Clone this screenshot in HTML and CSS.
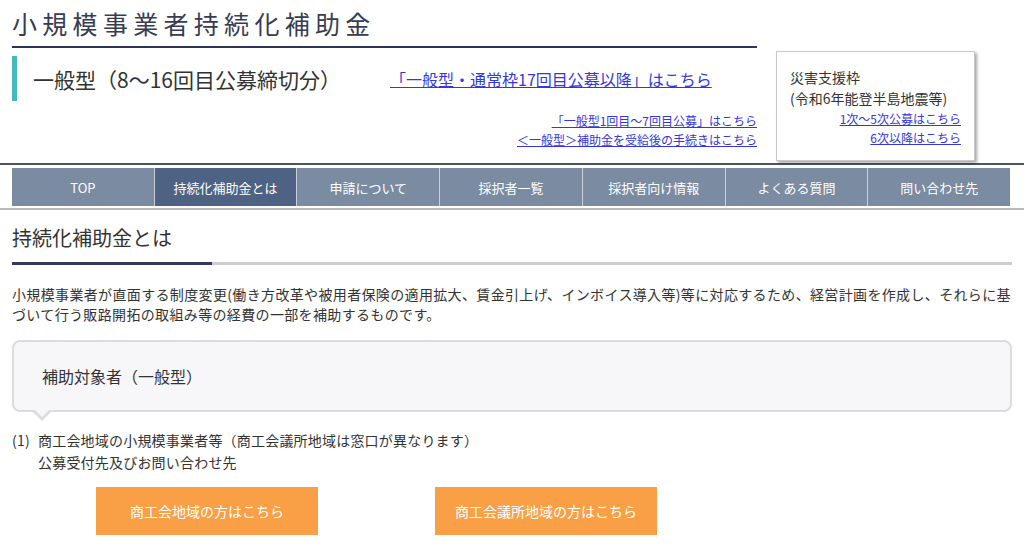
FILE: index.html
```html
<!DOCTYPE html>
<html lang="ja">
<head>
<meta charset="utf-8">
<title>小規模事業者持続化補助金</title>
<link rel="stylesheet" href="styles.css">
</head>
<body>
<header class="header">
  <div class="header-main">
    <h1 class="site-title">小規模事業者持続化補助金</h1>
    <div class="sub-row">
      <span class="sub-bar"></span>
      <span class="sub-title">一般型（8〜16回目公募締切分）</span>
      <a class="big-link" href="#">「一般型・通常枠17回目公募以降」はこちら</a>
    </div>
    <div class="small-links">
      <a href="#">「一般型1回目〜7回目公募」はこちら</a>
      <a href="#">＜一般型＞補助金を受給後の手続きはこちら</a>
    </div>
  </div>
  <div class="disaster">
    <p class="disaster-title">災害支援枠<br>(令和6年能登半島地震等)</p>
    <div class="disaster-links">
      <a href="#">1次〜5次公募はこちら</a>
      <a href="#">6次以降はこちら</a>
    </div>
  </div>
</header>
<nav class="nav">
  <ul class="nav-list">
    <li class="nav-item">TOP</li>
    <li class="nav-item active">持続化補助金とは</li>
    <li class="nav-item">申請について</li>
    <li class="nav-item">採択者一覧</li>
    <li class="nav-item">採択者向け情報</li>
    <li class="nav-item">よくある質問</li>
    <li class="nav-item">問い合わせ先</li>
  </ul>
</nav>
<main class="main">
  <h2 class="section-title">持続化補助金とは</h2>
  <p class="lead">小規模事業者が直面する制度変更(働き方改革や被用者保険の適用拡大、賃金引上げ、インボイス導入等)等に対応するため、経営計画を作成し、それらに基づいて行う販路開拓の取組み等の経費の一部を補助するものです。</p>
  <div class="bubble">補助対象者（一般型）</div>
  <div class="item">
    <span class="item-num">(1)</span>
    <div class="item-body">商工会地域の小規模事業者等（商工会議所地域は窓口が異なります）<br>公募受付先及びお問い合わせ先</div>
  </div>
  <div class="buttons">
    <a class="btn" href="#">商工会地域の方はこちら</a>
    <a class="btn" href="#">商工会議所地域の方はこちら</a>
  </div>
</main>
</body>
</html>
```
FILE: styles.css
```css
* { box-sizing: border-box; }
body {
  margin: 0;
  font-family: "Noto Sans CJK JP", "Noto Sans", sans-serif;
  color: #333;
  background: #fff;
}
a { color: #3535e2; }

.header {
  display: flex;
  align-items: flex-start;
  padding: 0 12px;
  height: 163px;
}
.header-main { width: 745px; }
.site-title {
  margin: 0;
  font-size: 25px;
  font-weight: 400;
  letter-spacing: 5.3px;
  line-height: 46px;
  color: #383c52;
  border-bottom: 2px solid #2e3458;
}
.sub-row {
  display: flex;
  align-items: center;
  height: 45px;
  margin-top: 8px;
}
.sub-bar {
  width: 5px;
  height: 45px;
  background: #45b8c2;
}
.sub-title {
  margin-left: 16px;
  font-size: 21px;
  color: #333;
  width: 357px;
}
.big-link { font-size: 16px; }
.small-links {
  display: flex;
  flex-direction: column;
  align-items: flex-end;
  margin-top: 10px;
  font-size: 12px;
  line-height: 19px;
}
.disaster {
  margin: 51px 0 0 19px;
  width: 199px;
  height: 110px;
  padding: 15px 13px 0 13px;
  border: 1px solid #c8c8c8;
  box-shadow: 2px 2px 3px rgba(0,0,0,0.35);
  background: #fff;
}
.disaster-title {
  margin: 0;
  font-size: 14px;
  line-height: 21px;
  color: #333;
}
.disaster-links {
  display: flex;
  flex-direction: column;
  align-items: flex-end;
  font-size: 12px;
  line-height: 19px;
}

.nav {
  border-top: 2px solid #4b526b;
  border-bottom: 2px solid #b8b8b8;
  padding: 3px 12px 2px;
}
.nav-list {
  display: flex;
  width: 998px;
  margin: 0;
  padding: 0;
  list-style: none;
}
.nav-item {
  flex: 1;
  height: 38px;
  display: flex;
  align-items: center;
  justify-content: center;
  background: #7a8ba2;
  color: #fff;
  font-size: 13px;
  border-left: 1px solid #c9d0da;
}
.nav-item:first-child { border-left: none; }
.nav-item.active { background: #4e6283; }

.main { padding: 0 12px; }
.section-title {
  margin: 0;
  padding-top: 13px;
  font-size: 20px;
  font-weight: 400;
  line-height: 30px;
  color: #333;
  height: 55px;
  border-bottom: 3px solid #cdcdcd;
  position: relative;
}
.section-title::after {
  content: "";
  position: absolute;
  left: 0;
  bottom: -3px;
  width: 200px;
  height: 3px;
  background: #343a5e;
}
.lead {
  margin: 19px 0 0;
  font-size: 14px;
  line-height: 20px;
  letter-spacing: 0.35px;
  color: #333;
}
.bubble {
  position: relative;
  margin-top: 16px;
  height: 72px;
  display: flex;
  align-items: center;
  padding-left: 28px;
  font-size: 16px;
  color: #333;
  background: #f7f6f9;
  border: 2px solid #dcdcdc;
  border-radius: 8px;
}
.bubble::before {
  content: "";
  position: absolute;
  left: 19px;
  bottom: -11px;
  border-left: 9px solid transparent;
  border-right: 9px solid transparent;
  border-top: 9px solid #dcdcdc;
}
.bubble::after {
  content: "";
  position: absolute;
  left: 21px;
  bottom: -7px;
  border-left: 7px solid transparent;
  border-right: 7px solid transparent;
  border-top: 7px solid #f7f6f9;
}
.item {
  display: flex;
  margin-top: 17px;
  font-size: 14px;
  line-height: 22px;
  letter-spacing: 0.2px;
  color: #333;
}
.item-num { width: 26px; }
.buttons {
  display: flex;
  gap: 117px;
  margin: 14px 0 0 84px;
}
.btn {
  width: 222px;
  height: 48px;
  display: flex;
  align-items: center;
  justify-content: center;
  background: #f99f45;
  color: #fff;
  text-decoration: none;
  font-size: 14px;
}
```
